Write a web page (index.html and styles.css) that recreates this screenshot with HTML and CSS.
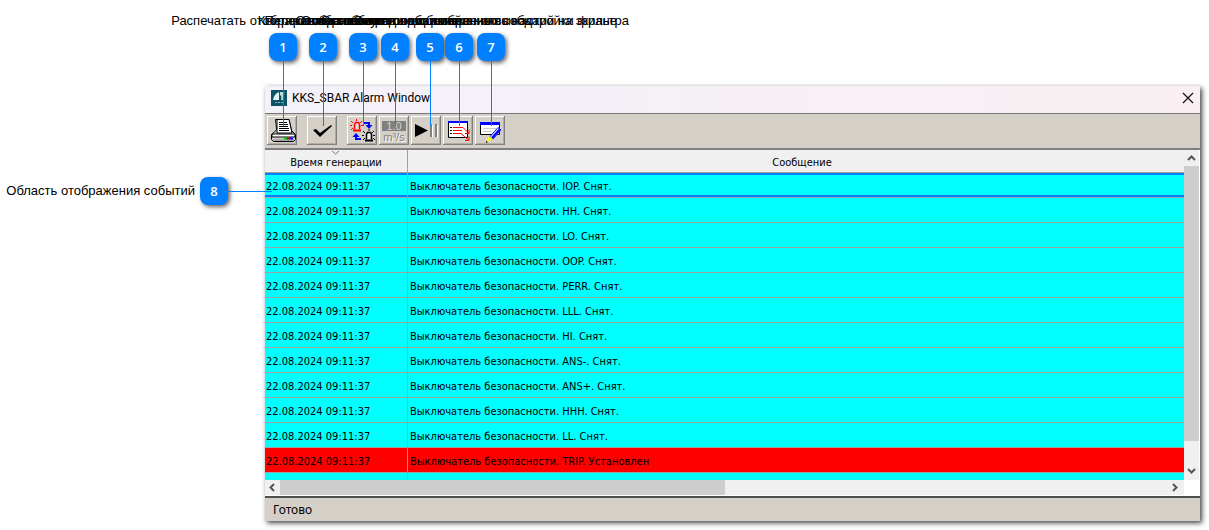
FILE: index.html
```html
<!DOCTYPE html>
<html lang="ru">
<head>
<meta charset="utf-8">
<title>KKS_SBAR Alarm Window</title>
<link rel="stylesheet" href="styles.css">
</head>
<body>
<main class="figure">
  <aside class="side-note"><span class="side-caption">Область отображения событий</span><span class="badge">8</span><i class="lead-side"></i></aside>
  <section class="window">
    <header class="titlebar">
      <svg class="logo" width="16" height="16" viewBox="0 0 16 16" aria-hidden="true"><path d="M0 0h16v16H0z" fill="#0d5365"/><path d="M2 10Q3 4 8 2v8z" fill="#e6f4f7"/><path d="M9 2h3q2 0 1 3l-1 5H9z" fill="#b5dce5"/><path d="M9 5q2 1 1 5H9z" fill="#0d5365"/><path d="M4 12.500h2m1 0h2m1 0h2" stroke="#76b7c4"/></svg>
      <h1 class="title">KKS_SBAR Alarm Window</h1>
      <button class="close" aria-label="Закрыть"><svg width="12" height="12" viewBox="0 0 12 12"><path d="M1 1l10 10M11 1L1 11" stroke="#111" stroke-width="1.2"/></svg></button>
    </header>
    <div class="toolbar">
      <button class="tool" aria-label="Печать"><svg width="30" height="29" viewBox="0 0 30 29"><path d="M8.500 3.500h13.500l3 13H10z" fill="#fff" stroke="#000"/><path d="M11 6.500h9M11 8.500h10M11.500 10.500h10M12 12.500h10M12 14.500h10" stroke="#000"/><path d="M9 14.500l-4.500 4v5l2 2h20l2-2v-5l-3.500-3.500" fill="#d4d0c8" stroke="#000"/><path d="M10 3.500h12l3 13.500H10z" fill="#fff" stroke="#000"/><path d="M12 6.500h8M12 8.500h9M12 10.500h9M12 12.500h10M12 14.500h10" stroke="#000"/><path d="M5 18h23v3H5z" fill="#fff" stroke="#000"/><path d="M6 23h21v2H7z" fill="#aaa"/><path d="M17 22.500h3" stroke="#00c000" stroke-width="2"/><path d="M20 22.500h3" stroke="#e00000" stroke-width="2"/><path d="M23 22.500h3" stroke="#0000ff" stroke-width="2"/></svg><span class="note"><span class="badge">1</span><i class="lead"></i><span class="caption">Распечатать отображаемые события</span></span></button>
      <button class="tool group" aria-label="Квитировать"><svg width="30" height="29" viewBox="0 0 30 29"><path d="M6 14l3-1 4 4 11-8 1 1-12 11z" fill="#000"/></svg><span class="note"><span class="badge">2</span><i class="lead"></i><span class="caption">Квитировать события</span></span></button>
      <button class="tool group" aria-label="Переключить звук"><svg width="30" height="29" viewBox="0 0 30 29"><g fill="none" stroke="red"><path d="M7.500 13.500V8.500l1-2h3l1 2v5" fill="#f4d8d0" stroke-width="1.500"/><path d="M6 14.500h8" stroke-width="2"/><path d="M4 5l2 2M9.500 3v2M15 5l-2 2M3 9.500h2M4 14l2-2M14 9.500h2"/></g><g fill="none" stroke="#000"><path d="M19.500 23.500v-5l1-2h3l1 2v5" fill="#eee" stroke-width="1.500"/><path d="M18 24.500h8" stroke-width="2"/><path d="M16 15l2 2M22 13v2M27 15l-2 2M15 19.500h2M26 19.500h2M16 24l2-2M28 24l-2-2"/></g><g fill="none" stroke="#00f" stroke-width="2"><path d="M17 7h5v3M9 20v3h5"/></g><path d="M18.500 9h7L22 13zM5.500 21h7L9 17z" fill="#00f"/></svg><span class="note"><span class="badge">3</span><i class="lead"></i><span class="caption">Переключение звука сообщений</span></span></button>
      <button class="tool" aria-label="Единицы измерения"><svg width="30" height="29" viewBox="0 0 30 29"><path d="M3 5h24v10H3z" fill="#808080"/><text class="unit light" x="15" y="14">1.0</text><text class="unit shade" x="16" y="26">m³/s</text><text class="unit dark" x="15" y="25">m³/s</text></svg><span class="note"><span class="badge">4</span><i class="lead"></i><span class="caption">Отображение единиц измерения</span></span></button>
      <button class="tool" aria-label="Пуск и пауза"><svg width="30" height="29" viewBox="0 0 30 29"><path d="M4 8l13 6.500L4 21z"/><path d="M19 8h2v13h-2zM24 8h2v13h-2z" fill="#808080"/><path d="M21.500 9v12M26.500 9v12" stroke="#fff"/></svg><span class="note wide"><span class="badge">5</span><i class="lead"></i><span class="caption">Остановка и возобновление вывода</span></span></button>
      <button class="tool" aria-label="Отображение на экране"><svg width="30" height="29" viewBox="0 0 30 29"><path d="M5.500 6.500h19v15h-19z" fill="#fff" stroke="#000"/><path d="M5 6h20" stroke="#00f" stroke-width="2"/><path d="M7 11.500h2m-2 3h2m-2 3h2" stroke="#000"/><path d="M10 11.500h10l6 6m0-4v4h-4M10 14.500h9M10 17.500h8l8 7m0-4v4h-4" fill="none" stroke="red"/></svg><span class="note"><span class="badge">6</span><i class="lead"></i><span class="caption">Отображение только выбранных событий на экране</span></span></button>
      <button class="tool" aria-label="Настройка фильтра"><svg width="30" height="29" viewBox="0 0 30 29"><path d="M5.500 7.500h19v11h-19z" fill="#fff" stroke="#000"/><path d="M5 7.500h20" stroke="#00f" stroke-width="3"/><path d="M8 12.500h13m-13 3h9" stroke="#ccc"/><path d="M23 11.500l3 2.500-8 9-3.500-2z" fill="#d8e4ff" stroke="#00f"/><path d="M25 13l-8 9" stroke="#00f" stroke-width="2"/><path d="M14 20l4 3-7 3.500z" fill="#ff0"/><path d="M11 25l2 1-2 1z"/></svg><span class="note"><span class="badge">7</span><i class="lead"></i><span class="caption">Открыть диалоговое окно настройки фильтра</span></span></button>
    </div>
    <div class="content">
      <div class="view">
        <table class="events">
          <colgroup><col class="col-time"><col></colgroup>
          <thead><tr><th class="sorted"><svg class="sort" width="7" height="4" viewBox="0 0 7 4"><path d="M0 0l3.500 3L7 0" fill="none" stroke="#777"/></svg>Время генерации</th><th class="msg-head">Сообщение</th></tr></thead>
          <tbody>
            <tr class="selected"><td>22.08.2024 09:11:37</td><td>Выключатель безопасности. IOP. Снят.</td></tr>
            <tr><td>22.08.2024 09:11:37</td><td>Выключатель безопасности. HH. Снят.</td></tr>
            <tr><td>22.08.2024 09:11:37</td><td>Выключатель безопасности. LO. Снят.</td></tr>
            <tr><td>22.08.2024 09:11:37</td><td>Выключатель безопасности. OOP. Снят.</td></tr>
            <tr><td>22.08.2024 09:11:37</td><td>Выключатель безопасности. PERR. Снят.</td></tr>
            <tr><td>22.08.2024 09:11:37</td><td>Выключатель безопасности. LLL. Снят.</td></tr>
            <tr><td>22.08.2024 09:11:37</td><td>Выключатель безопасности. HI. Снят.</td></tr>
            <tr><td>22.08.2024 09:11:37</td><td>Выключатель безопасности. ANS-. Снят.</td></tr>
            <tr><td>22.08.2024 09:11:37</td><td>Выключатель безопасности. ANS+. Снят.</td></tr>
            <tr><td>22.08.2024 09:11:37</td><td>Выключатель безопасности. HHH. Снят.</td></tr>
            <tr><td>22.08.2024 09:11:37</td><td>Выключатель безопасности. LL. Снят.</td></tr>
            <tr class="trip"><td>22.08.2024 09:11:37</td><td>Выключатель безопасности. TRIP. Установлен</td></tr>
            <tr class="partial"><td></td><td></td></tr>
          </tbody>
        </table>
      </div>
      <div class="vscroll"><svg class="arrow" viewBox="0 0 15 15"><path d="M4 10l3.500-3.500L11 10" /></svg><div class="vthumb"></div><svg class="arrow down" viewBox="0 0 15 15"><path d="M4 4l3.500 3.500L11 4" /></svg></div>
      <div class="hscroll"><svg class="arrow" viewBox="0 0 15 15"><path d="M9 4L5.500 7.500 9 11" /></svg><div class="htrack"><div class="hthumb"></div></div><svg class="arrow" viewBox="0 0 15 15"><path d="M4 4l3.500 3.500L4 11" /></svg></div>
    </div>
    <footer class="status">Готово</footer>
  </section>
</main>
</body>
</html>
```
FILE: styles.css
```css
* { box-sizing: border-box; }
body { margin: 0; background: #fff; color: #000; font: 12px/16px "Liberation Sans", Arial, sans-serif; }
svg { display: block; }
.figure { display: grid; grid-template-columns: 265px minmax(0, 1fr); align-items: start; padding: 86px 9px 8px 0; }

.side-note { display: flex; align-items: center; justify-content: flex-end; position: relative; margin-top: 91px; padding-right: 37px; }
.side-caption { margin-right: 5px; font-size: 13px; line-height: 16px; white-space: nowrap; }
.badge { display: block; width: 28px; height: 28px; border-radius: 8px; background: #0080ff; color: #fff; font: 600 13px/28px "Open Sans", sans-serif; text-align: center; box-shadow: 2px 2px 4px rgba(0, 0, 0, .6); }
.lead-side { position: absolute; z-index: 2; top: 14px; right: -7px; width: 44px; height: 1px; background: #0080ff; }

.window { background: #d4d0c8; box-shadow: 2px 2px 5px rgba(0, 0, 0, .75); font-family: "DejaVu Sans Condensed", "DejaVu Sans", sans-serif; }
.titlebar { display: flex; align-items: center; gap: 5px; height: 28px; padding: 0 6px 4px; border-bottom: 1px solid #777; background: linear-gradient(90deg, #f3f1fa, #f9eff2); }
.title { flex: 1; margin: 0; font: 400 12px/16px Roboto, sans-serif; }
.close { padding: 0; border: 0; background: none; }

.toolbar { display: flex; gap: 2px; height: 36px; padding: 2px; border-bottom: 2px solid #808080; }
.tool { position: relative; width: 30px; height: 29px; padding: 0; border: 0; background: #d4d0c8; color: #000; box-shadow: inset -1px -1px #808080, inset 1px 1px #fff, inset -2px -2px #b0aca4; }
.group { margin-left: 8px; }
.note { position: absolute; top: -83px; left: 2px; z-index: 3; display: flex; flex-direction: column; align-items: center; width: 28px; }
.wide { left: 5px; }
.lead { width: 1px; height: 65px; background: #0080ff; }
.caption { position: absolute; bottom: calc(100% + 4px); font: 13px/16px "Liberation Sans", Arial, sans-serif; white-space: nowrap; }
.unit { font: 11px "Liberation Sans", sans-serif; text-anchor: middle; }
.light { fill: #d4d0c8; }
.shade { fill: #fff; }
.dark { fill: #808080; }

.content { display: grid; grid-template-columns: minmax(0, 1fr) 15px; padding: 0 1px 1px 0; background: #fff; }
.view { overflow: hidden; }
.events { width: 100%; table-layout: fixed; border-collapse: separate; border-spacing: 0; background: #0ff; font-size: 11px; line-height: 14px; }
.col-time { width: 143px; }
.events th { position: relative; height: 23px; padding: 3px 2px 0; border-bottom: 1px solid #a0a0a0; background: #f0f0f0; font-weight: 400; }
.events th:first-child, .events td:first-child { border-right: 1px solid #a0a0a0; }
.events .msg-head { padding-left: 14px; }
.sort { position: absolute; top: 1px; left: 67px; }
.events td { height: 25px; padding: 3px 2px 0; border-bottom: 1px solid #a0a0a0; white-space: nowrap; }
.events td:first-child { padding-left: 1px; }
.selected td { box-shadow: inset 0 2px #0080ff, inset 0 -2px #0080ff; }
.trip td { background: #f00; }
.events .partial td { height: 7px; padding: 0; border-bottom: 0; }

.arrow { flex: none; width: 15px; height: 15px; fill: none; stroke: #555; stroke-width: 2; }
.vscroll { display: flex; flex-direction: column; background: #f0f0f0; }
.vthumb { flex: 275; margin-top: 1px; background: #cdcdcd; }
.down { margin-top: 24px; }
.hscroll { display: flex; height: 15px; background: #f0f0f0; }
.htrack { flex: 1; }
.hthumb { width: 50%; height: 100%; background: #cdcdcd; }
.status { padding: 4px 8px 3px; border-top: 2px solid #505050; font: 12px/16px "Noto Sans", sans-serif; }
```
